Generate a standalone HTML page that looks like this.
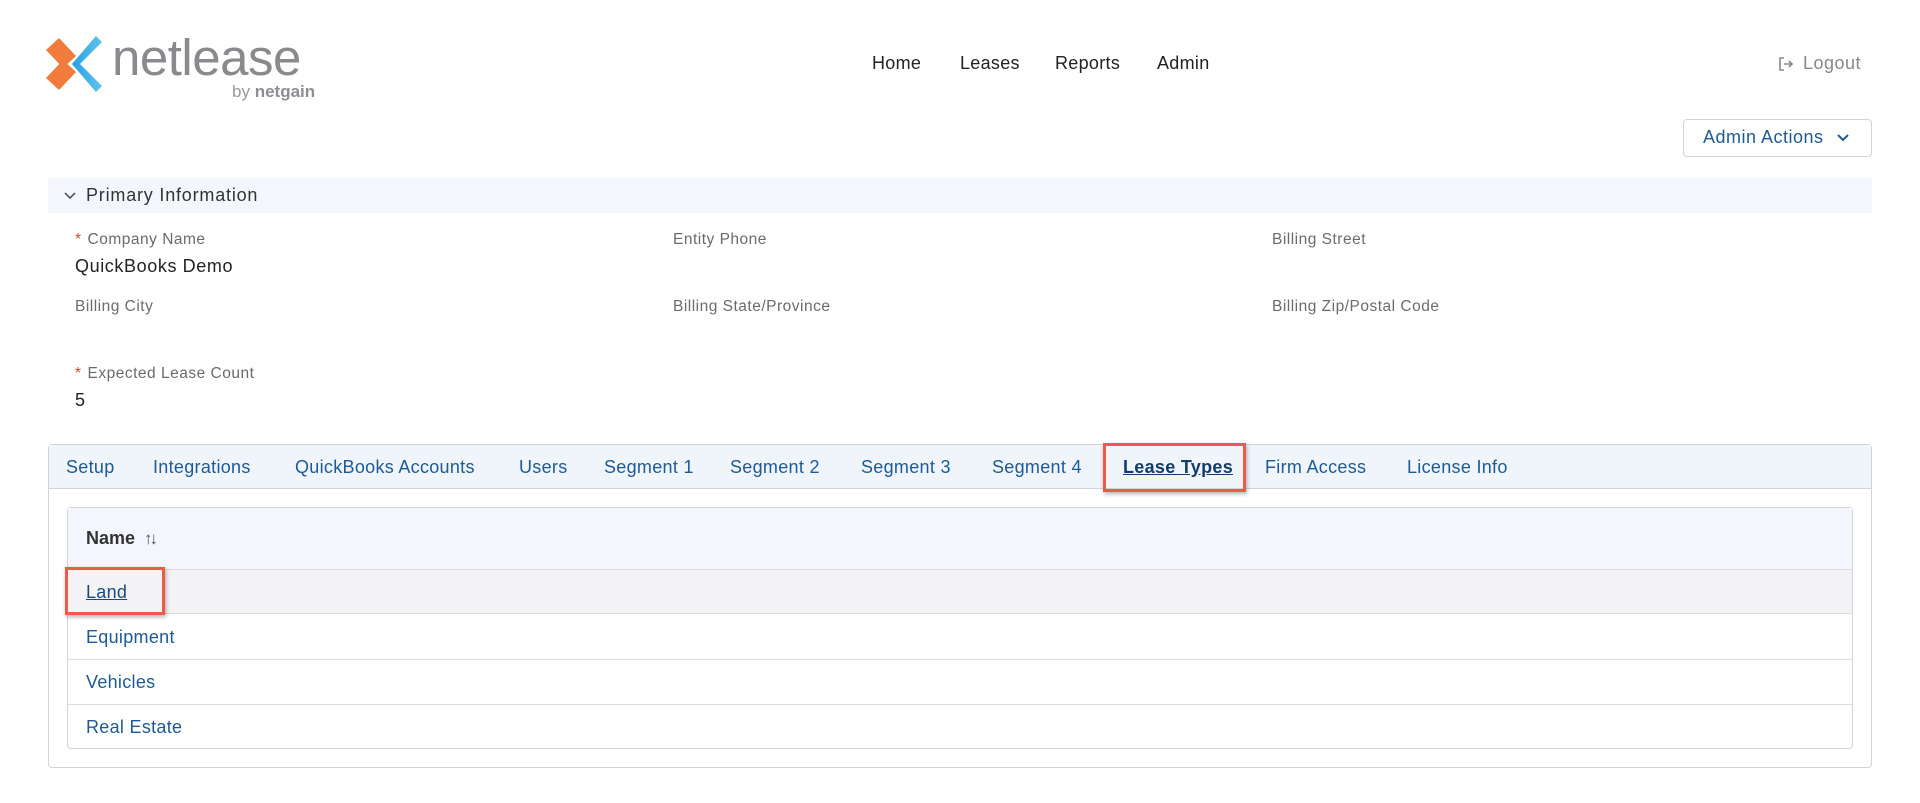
<!DOCTYPE html>
<html><head><style>
*{margin:0;padding:0;box-sizing:border-box}
body{width:1920px;height:803px;background:#fff;font-family:"Liberation Sans",sans-serif;position:relative;overflow:hidden;color:#222}
.a{position:absolute;white-space:nowrap}
.nav{font-size:18px;color:#222;top:53px;letter-spacing:.3px}
.lbl{font-size:15.5px;color:#6b6b6b;letter-spacing:.5px}
.lbl b{color:#c0502e;font-weight:normal;margin-right:6px}
.val{font-size:18px;color:#222;letter-spacing:.6px}
.tab{font-size:18px;color:#1d5a96;top:457px;letter-spacing:.3px}
.row{position:absolute;left:68px;width:1784px;border-top:1px solid #dcdcdc;font-size:18px;color:#1d5a96;padding-left:18px;letter-spacing:.3px}
</style></head><body>
<svg class="a" style="left:46px;top:34px" width="56" height="60" viewBox="0 0 56 60">
<defs><linearGradient id="g" x1="0" x2="1"><stop offset="0" stop-color="#2a9fe0"/><stop offset="1" stop-color="#5ec3ee"/></linearGradient></defs>
<polygon points="0,16 13,4 30,22 17,34" fill="#f07b3a"/>
<polygon points="0,44 13,56 30,38 17,26" fill="#f07b3a"/>
<polygon points="50,2 56,8 34,30 56,52 50,58 26,30" fill="url(#g)"/>
</svg>
<div class="a" style="left:112px;top:28px;font-size:51px;color:#8a8a8e;letter-spacing:-0.5px">netlease</div>
<div class="a" style="left:232px;top:82px;font-size:17px;color:#999">by <span style="font-weight:bold;color:#8e8e92">netgain</span></div>
<div class="a nav" style="left:872px">Home</div>
<div class="a nav" style="left:960px">Leases</div>
<div class="a nav" style="left:1055px">Reports</div>
<div class="a nav" style="left:1157px">Admin</div>
<svg class="a" style="left:1778px;top:56px" width="16" height="16" viewBox="0 0 16 16" fill="none" stroke="#888" stroke-width="1.6"><path d="M6 2H2v12h4M6 8h8M11 5l3 3-3 3"/></svg>
<div class="a" style="left:1803px;top:53px;font-size:18px;color:#888;letter-spacing:.5px">Logout</div>
<div class="a" style="left:1683px;top:119px;width:189px;height:38px;border:1px solid #d4d4d8;border-radius:4px"></div>
<div class="a" style="left:1703px;top:127px;font-size:18px;color:#1d5a96;letter-spacing:.5px">Admin Actions</div>
<svg class="a" style="left:1836px;top:133px" width="14" height="10" viewBox="0 0 14 10" fill="none" stroke="#1d5a96" stroke-width="2"><path d="M2 2l5 5 5-5"/></svg>
<div class="a" style="left:48px;top:178px;width:1824px;height:35px;background:#f3f6fc"></div>
<svg class="a" style="left:63px;top:191px" width="14" height="10" viewBox="0 0 14 10" fill="none" stroke="#444" stroke-width="1.5"><path d="M2 2l5 5 5-5"/></svg>
<div class="a" style="left:86px;top:185px;font-size:18px;color:#333;letter-spacing:.8px">Primary Information</div>
<div class="a lbl" style="left:75px;top:231px"><b>*</b>Company Name</div>
<div class="a val" style="left:75px;top:256px">QuickBooks Demo</div>
<div class="a lbl" style="left:673px;top:231px">Entity Phone</div>
<div class="a lbl" style="left:1272px;top:231px">Billing Street</div>
<div class="a lbl" style="left:75px;top:298px">Billing City</div>
<div class="a lbl" style="left:673px;top:298px">Billing State/Province</div>
<div class="a lbl" style="left:1272px;top:298px">Billing Zip/Postal Code</div>
<div class="a lbl" style="left:75px;top:365px"><b>*</b>Expected Lease Count</div>
<div class="a val" style="left:75px;top:390px">5</div>
<div class="a" style="left:48px;top:444px;width:1824px;height:324px;border:1px solid #d4d4d8;border-radius:4px"></div>
<div class="a" style="left:49px;top:445px;width:1822px;height:44px;background:#f0f5fc;border-bottom:1px solid #d4d4d8"></div>
<div class="a tab" style="left:66px">Setup</div>
<div class="a tab" style="left:153px">Integrations</div>
<div class="a tab" style="left:295px">QuickBooks Accounts</div>
<div class="a tab" style="left:519px">Users</div>
<div class="a tab" style="left:604px">Segment 1</div>
<div class="a tab" style="left:730px">Segment 2</div>
<div class="a tab" style="left:861px">Segment 3</div>
<div class="a tab" style="left:992px">Segment 4</div>
<div class="a tab" style="left:1123px;color:#123d6b;font-weight:bold;text-decoration:underline">Lease Types</div>
<div class="a tab" style="left:1265px">Firm Access</div>
<div class="a tab" style="left:1407px">License Info</div>
<div class="a" style="left:1103px;top:443px;width:143px;height:49px;border:3px solid #ee5a48;box-shadow:1px 2px 4px rgba(0,0,0,.3)"></div>
<div class="a" style="left:67px;top:507px;width:1786px;height:242px;border:1px solid #d4d4d8;border-radius:4px"></div>
<div class="a" style="left:68px;top:508px;width:1784px;height:61px;background:#f3f6fc"></div>
<div class="a" style="left:86px;top:528px;font-size:18px;font-weight:bold;color:#333">Name</div>
<div class="a" style="left:144px;top:529px;font-size:17px;color:#555;letter-spacing:-3px">↑↓</div>
<div class="row" style="top:569px;height:44px;line-height:44px;background:#f3f2f4"><span style="text-decoration:underline;color:#1a4a7c">Land</span></div>
<div class="row" style="top:613px;height:46px;line-height:46px">Equipment</div>
<div class="row" style="top:659px;height:45px;line-height:45px">Vehicles</div>
<div class="row" style="top:704px;height:44px;line-height:44px">Real Estate</div>
<div class="a" style="left:65px;top:567px;width:100px;height:48px;border:3px solid #ee5a48;box-shadow:1px 2px 4px rgba(0,0,0,.3)"></div>
</body></html>
